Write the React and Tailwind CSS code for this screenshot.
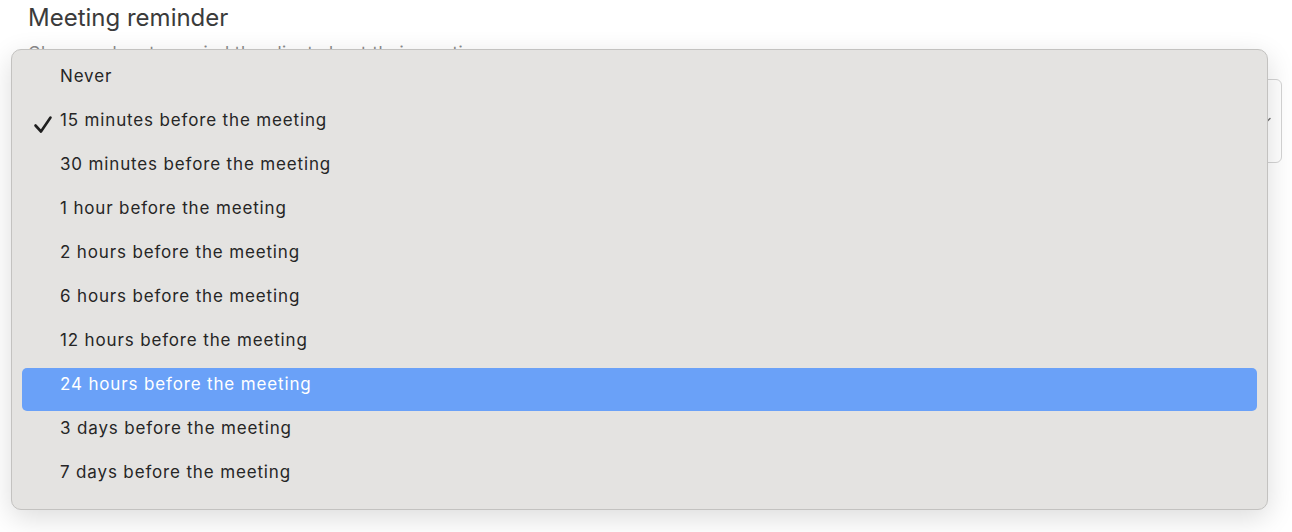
import React from 'react'

const options = [
  'Never',
  '15 minutes before the meeting',
  '30 minutes before the meeting',
  '1 hour before the meeting',
  '2 hours before the meeting',
  '6 hours before the meeting',
  '12 hours before the meeting',
  '24 hours before the meeting',
  '3 days before the meeting',
  '7 days before the meeting',
]

export default function App() {
  const selected = 1
  const hovered = 7

  return (
    <div className="relative w-[1292px] h-[532px] bg-white overflow-hidden" style={{ fontFamily: 'Inter, "Liberation Sans", sans-serif' }}>
      <div className="pl-[28px] pt-[3px] pr-[10px]">
        <h2 className="text-[24px] leading-[30px] text-[#3b3b3b] font-normal tracking-[0px]">Meeting reminder</h2>
        <p className="mt-[9px] text-[17px] leading-[22px] text-[#8a8a8a] tracking-[0.5px]">Choose when to remind the client about their meeting</p>
        <div className="mt-[15px] h-[84px] rounded-md border border-[#d4d4d4] flex items-center justify-end pr-[10px]">
          <svg width="12" height="8" viewBox="0 0 12 8" className="text-[#777]">
            <path d="M1 1.5 L6 6.5 L11 1.5" fill="none" stroke="currentColor" strokeWidth="1.5" strokeLinecap="round" />
          </svg>
        </div>
      </div>

      <div className="absolute left-[11px] top-[49px] w-[1257px] h-[461px] rounded-[10px] bg-[#e4e3e1] border border-[#c3c2c0] shadow-[0_8px_28px_rgba(0,0,0,0.14)] pt-[10px] px-[10px]">
        {options.map((label, i) => (
          <div
            key={label}
            className={`relative h-[43px] mb-px rounded-[5px] pl-[38px] pt-[5px] text-[17px] leading-[22px] tracking-[0.85px] ${i === hovered ? 'bg-[#6aa1f8] text-white' : 'text-[#262626]'}`}
          >
            {i === selected && (
              <svg width="20" height="20" viewBox="0 0 20 20" className="absolute left-[11px] top-[11px]">
                <path d="M2.5 10.5 L8 16.5 L17.5 2.5" fill="none" stroke="#1f1f1f" strokeWidth="2.6" strokeLinecap="round" strokeLinejoin="round" />
              </svg>
            )}
            {label}
          </div>
        ))}
      </div>
    </div>
  )
}
